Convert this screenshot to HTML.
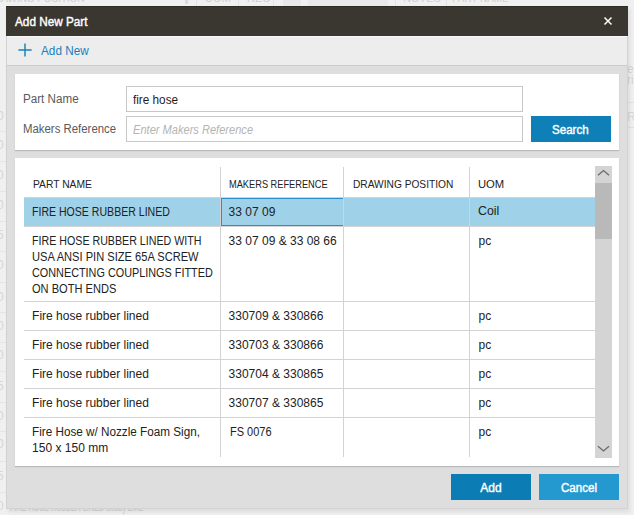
<!DOCTYPE html>
<html><head><meta charset="utf-8">
<style>
html,body{margin:0;padding:0;}
body{width:634px;height:515px;overflow:hidden;position:relative;background:#f0f0f0;font-family:"Liberation Sans",sans-serif;font-size:12px;color:#222;}
.a{position:absolute;}
.t{position:absolute;white-space:nowrap;line-height:16px;transform-origin:0 0;}
.bgtxt{position:absolute;white-space:nowrap;color:#cfcfcf;font-size:12px;line-height:14px;}
#dlg{left:6px;top:6px;width:622px;height:503px;background:#dedede;border:1px solid #d2d2d2;border-top:0;box-sizing:border-box;box-shadow:2px 3px 4px rgba(0,0,0,0.08);}
#hdr{left:6px;top:6px;width:622px;height:30px;background:#3a3630;border-top:1px solid #2f2c26;box-sizing:border-box;}
#tb{left:7px;top:36px;width:620px;height:29px;background:#ededed;border-top:1px solid #f7f7f7;box-sizing:border-box;}
#tbline{left:7px;top:65px;width:620px;height:1px;background:#cdcdcd;}
.panel{background:#fff;box-shadow:0 1px 1px rgba(0,0,0,0.16);}
.inp{background:#fff;border:1px solid #c8c8c8;box-sizing:border-box;}
.btn{height:26px;}
.hl{background:#d3d3d3;}
.vl{background:#d3d3d3;width:1px;}
</style></head><body>
<div class="bgtxt" style="left:-13px;top:-9px;font-size:11px;transform:scaleX(0.9);transform-origin:0 0;">DRAWING POSITION</div>
<div class="a" style="left:196px;top:0;width:1px;height:6px;background:#e2e2e2;"></div>
<div class="bgtxt" style="left:205px;top:-9px;font-size:11px;">UOM</div>
<div class="a" style="left:238px;top:0;width:1px;height:6px;background:#e2e2e2;"></div>
<div class="bgtxt" style="left:247px;top:-9px;font-size:11px;">REC</div>
<div class="a" style="left:273px;top:0;width:1px;height:6px;background:#e2e2e2;"></div>
<div class="a" style="left:283px;top:0;width:18px;height:6px;background:#e8e8e8;"></div>
<div class="a" style="left:308px;top:0;width:80px;height:6px;background:#e9e9e9;"></div>
<div class="a" style="left:395px;top:0;width:1px;height:6px;background:#e2e2e2;"></div>
<div class="bgtxt" style="left:403px;top:-9px;font-size:11px;">NOTES</div>
<div class="a" style="left:446px;top:0;width:1px;height:6px;background:#e2e2e2;"></div>
<div class="bgtxt" style="left:452px;top:-9px;font-size:11px;transform:scaleX(0.9);transform-origin:0 0;">PART NAME</div>
<div class="bgtxt" style="left:-3px;top:109px;color:#d6d6d6;">0</div>
<div class="bgtxt" style="left:-3px;top:138px;color:#d6d6d6;">0</div>
<div class="bgtxt" style="left:-3px;top:168px;color:#d6d6d6;">0</div>
<div class="bgtxt" style="left:-3px;top:198px;color:#d6d6d6;">0</div>
<div class="bgtxt" style="left:-3px;top:228px;color:#d6d6d6;">5</div>
<div class="bgtxt" style="left:-3px;top:258px;color:#d6d6d6;">0</div>
<div class="bgtxt" style="left:-3px;top:290px;color:#d6d6d6;">0</div>
<div class="bgtxt" style="left:-3px;top:319px;color:#d6d6d6;">0</div>
<div class="bgtxt" style="left:-3px;top:348px;color:#d6d6d6;">0</div>
<div class="bgtxt" style="left:-3px;top:379px;color:#d6d6d6;">5</div>
<div class="bgtxt" style="left:-3px;top:409px;color:#d6d6d6;">0</div>
<div class="bgtxt" style="left:-3px;top:437px;color:#d6d6d6;">0</div>
<div class="bgtxt" style="left:-3px;top:469px;color:#d6d6d6;">5</div>
<div class="bgtxt" style="left:-3px;top:499px;color:#d6d6d6;">0</div>
<div class="a" style="left:0;top:131px;width:6px;height:1px;background:#e4e4e4;"></div>
<div class="a" style="left:0;top:161px;width:6px;height:1px;background:#e4e4e4;"></div>
<div class="a" style="left:0;top:191px;width:6px;height:1px;background:#e4e4e4;"></div>
<div class="a" style="left:0;top:221px;width:6px;height:1px;background:#e4e4e4;"></div>
<div class="a" style="left:0;top:251px;width:6px;height:1px;background:#e4e4e4;"></div>
<div class="a" style="left:0;top:282px;width:6px;height:1px;background:#e4e4e4;"></div>
<div class="a" style="left:0;top:312px;width:6px;height:1px;background:#e4e4e4;"></div>
<div class="a" style="left:0;top:342px;width:6px;height:1px;background:#e4e4e4;"></div>
<div class="a" style="left:0;top:371px;width:6px;height:1px;background:#e4e4e4;"></div>
<div class="a" style="left:0;top:402px;width:6px;height:1px;background:#e4e4e4;"></div>
<div class="a" style="left:0;top:431px;width:6px;height:1px;background:#e4e4e4;"></div>
<div class="a" style="left:0;top:461px;width:6px;height:1px;background:#e4e4e4;"></div>
<div class="a" style="left:0;top:492px;width:6px;height:1px;background:#e4e4e4;"></div>
<div class="bgtxt" style="left:10px;top:500px;font-size:12px;color:#d0d0d0;transform:scaleX(0.6);transform-origin:0 0;">FIRE HOSE RUBBER LINED Ssuby ZME</div>

<div class="a" style="left:185px;top:0;width:3px;height:4px;background:#dadada;"></div>
<div class="bgtxt" style="left:627px;top:62px;font-size:12px;color:#d4d4d4;">e</div>
<div class="bgtxt" style="left:627px;top:73px;font-size:12px;color:#d4d4d4;">ri</div>
<div class="bgtxt" style="left:627px;top:110px;font-size:12px;color:#d8d8d8;">R</div>
<div class="a" style="left:628px;top:102px;width:6px;height:1px;background:#e2e2e2;"></div>
<div class="a" style="left:628px;top:127px;width:6px;height:1px;background:#e2e2e2;"></div>
<div id="dlg" class="a"></div>
<div id="hdr" class="a"></div>
<svg class="a" style="left:602px;top:15px;" width="12" height="12" viewBox="0 0 12 12"><path d="M2.5 2.5L9.5 9.5M9.5 2.5L2.5 9.5" stroke="#fff" stroke-width="1.45"/></svg>
<div id="tb" class="a"></div>
<div id="tbline" class="a"></div>
<svg class="a" style="left:18px;top:43px;" width="14" height="14" viewBox="0 0 14 14"><path d="M0.4 7H13.6M7 0.4V13.6" stroke="#1a80ba" stroke-width="1.45"/></svg>

<div class="a panel" style="left:15px;top:74px;width:604px;height:76px;"></div>
<div class="a inp" style="left:126px;top:86px;width:397px;height:26px;"></div>
<div class="a inp" style="left:126px;top:116px;width:397px;height:26px;"></div>
<div class="a btn" style="left:531px;top:116px;width:80px;background:#0f80b7;"></div>

<div class="a panel" style="left:15px;top:158px;width:604px;height:308px;"></div>
<div class="a" style="left:24px;top:198px;width:571px;height:28px;background:#9fd2e8;"></div>
<div class="a" style="left:221px;top:198px;width:123px;height:28px;border:1px solid #2a8fd0;box-sizing:border-box;"></div>
<div class="a hl" style="left:24px;top:197px;width:571px;height:1px;"></div>
<div class="a hl" style="left:24px;top:226px;width:571px;height:1px;"></div>
<div class="a hl" style="left:24px;top:301px;width:571px;height:1px;"></div>
<div class="a hl" style="left:24px;top:330px;width:571px;height:1px;"></div>
<div class="a hl" style="left:24px;top:359px;width:571px;height:1px;"></div>
<div class="a hl" style="left:24px;top:388px;width:571px;height:1px;"></div>
<div class="a hl" style="left:24px;top:417px;width:571px;height:1px;"></div>
<div class="a vl" style="left:220px;top:167px;height:290px;"></div>
<div class="a vl" style="left:343px;top:167px;height:290px;"></div>
<div class="a vl" style="left:469px;top:167px;height:290px;"></div>

<div class="a" style="left:595px;top:166px;width:17px;height:292px;background:#d4d4d4;"></div>
<div class="a" style="left:595px;top:183px;width:17px;height:56px;background:#b9b9b9;"></div>
<svg class="a" style="left:595px;top:166px;" width="17" height="17" viewBox="0 0 17 17"><path d="M3 9.3L8.5 4.6L14 9.3" fill="none" stroke="#6b6b6b" stroke-width="1.3"/></svg>
<svg class="a" style="left:595px;top:441px;" width="17" height="17" viewBox="0 0 17 17"><path d="M3 5.2L8.5 9.9L14 5.2" fill="none" stroke="#6b6b6b" stroke-width="1.3"/></svg>

<div class="a btn" style="left:451px;top:474px;width:80px;background:#0c7cb4;"></div>
<div class="a btn" style="left:539px;top:474px;width:80px;background:#2499d0;"></div>
<div class="t" id="title" style="left:14.5px;top:14px;font-size:12px;line-height:16px;color:#fff;transform:scaleX(0.9797);-webkit-text-stroke:0.4px #fff;">Add New Part</div>
<div class="t" id="addnew" style="left:41.4px;top:43px;font-size:12px;line-height:16px;color:#1a80ba;transform:scaleX(0.9796);">Add New</div>
<div class="t" id="lblpn" style="left:23.0px;top:91px;font-size:12px;line-height:16px;color:#5a5a5a;transform:scaleX(0.9696);">Part Name</div>
<div class="t" id="lblmr" style="left:22.5px;top:121px;font-size:12px;line-height:16px;color:#5a5a5a;transform:scaleX(0.9495);">Makers Reference</div>
<div class="t" id="inpfh" style="left:133.0px;top:92px;font-size:12px;line-height:16px;color:#1e1e1e;transform:scaleX(0.9783);">fire hose</div>
<div class="t" id="inpph" style="left:133.0px;top:122px;font-size:12px;line-height:16px;font-style:italic;color:#b4b4b4;transform:scaleX(0.9231);">Enter Makers Reference</div>
<div class="t" id="search" style="left:552.0px;top:122px;font-size:12px;line-height:16px;color:#fff;transform:scaleX(0.9639);-webkit-text-stroke:0.4px #fff;">Search</div>
<div class="t" id="hpn" style="left:32.6px;top:176px;font-size:11px;line-height:16px;color:#222;transform:scaleX(0.9344);">PART NAME</div>
<div class="t" id="hmr" style="left:229.1px;top:176px;font-size:11px;line-height:16px;color:#222;transform:scaleX(0.8405);">MAKERS REFERENCE</div>
<div class="t" id="hdp" style="left:352.6px;top:176px;font-size:11px;line-height:16px;color:#222;transform:scaleX(0.9252);">DRAWING POSITION</div>
<div class="t" id="huom" style="left:478.1px;top:176px;font-size:11px;line-height:16px;color:#222;transform:scaleX(1.0208);">UOM</div>
<div class="t" id="r1c1" style="left:31.6px;top:204px;font-size:12px;line-height:16px;color:#222;transform:scaleX(0.8800);">FIRE HOSE RUBBER LINED</div>
<div class="t" id="r1c2" style="left:228.6px;top:204px;font-size:12px;line-height:16px;color:#222;">33 07 09</div>
<div class="t" id="r1c4" style="left:477.6px;top:203px;font-size:12px;line-height:16px;color:#222;transform:scaleX(1.0316);">Coil</div>
<div class="t" id="r2c1l0" style="left:32.1px;top:233px;font-size:12px;line-height:16px;color:#222;transform:scaleX(0.8889);">FIRE HOSE RUBBER LINED WITH</div>
<div class="t" id="r2c1l1" style="left:32.1px;top:249px;font-size:12px;line-height:16px;color:#222;transform:scaleX(0.9251);">USA ANSI PIN SIZE 65A SCREW</div>
<div class="t" id="r2c1l2" style="left:32.1px;top:265px;font-size:12px;line-height:16px;color:#222;transform:scaleX(0.9035);">CONNECTING COUPLINGS FITTED</div>
<div class="t" id="r2c1l3" style="left:32.1px;top:281px;font-size:12px;line-height:16px;color:#222;transform:scaleX(0.9231);">ON BOTH ENDS</div>
<div class="t" id="r2c2" style="left:228.6px;top:233px;font-size:12px;line-height:16px;color:#222;">33 07 09 &amp; 33 08 66</div>
<div class="t" id="r2c4" style="left:478.6px;top:233px;font-size:12px;line-height:16px;color:#222;">pc</div>
<div class="t" id="r3c1" style="left:32.1px;top:308px;font-size:12px;line-height:16px;color:#222;">Fire hose rubber lined</div>
<div class="t" id="r3c2" style="left:228.6px;top:308px;font-size:12px;line-height:16px;color:#222;">330709 &amp; 330866</div>
<div class="t" id="r3c4" style="left:478.6px;top:308px;font-size:12px;line-height:16px;color:#222;">pc</div>
<div class="t" id="r4c1" style="left:32.1px;top:337px;font-size:12px;line-height:16px;color:#222;">Fire hose rubber lined</div>
<div class="t" id="r4c2" style="left:228.6px;top:337px;font-size:12px;line-height:16px;color:#222;">330703 &amp; 330866</div>
<div class="t" id="r4c4" style="left:478.6px;top:337px;font-size:12px;line-height:16px;color:#222;">pc</div>
<div class="t" id="r5c1" style="left:32.1px;top:366px;font-size:12px;line-height:16px;color:#222;">Fire hose rubber lined</div>
<div class="t" id="r5c2" style="left:228.6px;top:366px;font-size:12px;line-height:16px;color:#222;">330704 &amp; 330865</div>
<div class="t" id="r5c4" style="left:478.6px;top:366px;font-size:12px;line-height:16px;color:#222;">pc</div>
<div class="t" id="r6c1" style="left:32.1px;top:395px;font-size:12px;line-height:16px;color:#222;">Fire hose rubber lined</div>
<div class="t" id="r6c2" style="left:228.6px;top:395px;font-size:12px;line-height:16px;color:#222;">330707 &amp; 330865</div>
<div class="t" id="r6c4" style="left:478.6px;top:395px;font-size:12px;line-height:16px;color:#222;">pc</div>
<div class="t" id="r7c1l0" style="left:32.1px;top:424px;font-size:12px;line-height:16px;color:#222;transform:scaleX(0.9765);">Fire Hose w/ Nozzle Foam Sign,</div>
<div class="t" id="r7c1l1" style="left:32.1px;top:440px;font-size:12px;line-height:16px;color:#222;">150 x 150 mm</div>
<div class="t" id="r7c2" style="left:229.6px;top:424px;font-size:12px;line-height:16px;color:#222;transform:scaleX(0.9159);">FS 0076</div>
<div class="t" id="r7c4" style="left:478.6px;top:424px;font-size:12px;line-height:16px;color:#222;">pc</div>
<div class="t" id="add" style="left:480.3px;top:480px;font-size:12px;line-height:16px;color:#fff;-webkit-text-stroke:0.4px #fff;">Add</div>
<div class="t" id="cancel" style="left:561.3px;top:480px;font-size:12px;line-height:16px;color:#fff;transform:scaleX(0.9639);-webkit-text-stroke:0.4px #fff;">Cancel</div>
</body></html>
